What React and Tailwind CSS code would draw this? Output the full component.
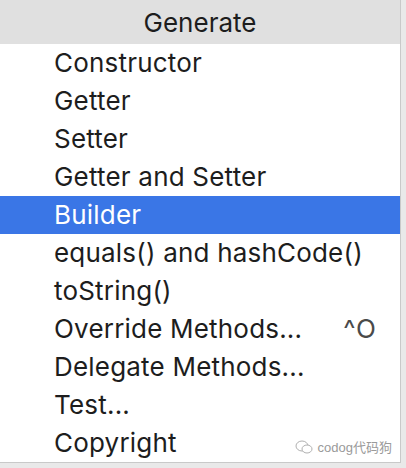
import React from "react";

const items = [
  { label: "Constructor" },
  { label: "Getter" },
  { label: "Setter" },
  { label: "Getter and Setter" },
  { label: "Builder", selected: true },
  { label: "equals() and hashCode()" },
  { label: "toString()" },
  { label: "Override Methods...", shortcut: "^O" },
  { label: "Delegate Methods..." },
  { label: "Test..." },
  { label: "Copyright" },
];

export default function App() {
  return (
    <div
      className="w-[406px] h-[468px] bg-[#e9e9e9] overflow-hidden"
      style={{ fontFamily: "Inter, 'Liberation Sans', sans-serif" }}
    >
      <div className="relative w-[401px] bg-white border-r border-b border-[#c9c9c9]">
        <div className="h-[44px] bg-[#e0e0e0] flex items-center justify-center text-[26px] text-[#1d1d1d] leading-none pt-[2px]">
          Generate
        </div>
        {items.map((it) => (
          <div
            key={it.label}
            className={
              it.selected
                ? "h-[38px] flex items-center pl-[54px] pr-[23px] bg-[#3a76e6] text-white text-[26px] leading-none tracking-[0.2px]"
                : "h-[38px] flex items-center pl-[54px] pr-[23px] text-[#1d1d1d] text-[26px] leading-none tracking-[0.2px]"
            }
          >
            <span>{it.label}</span>
            {it.shortcut && (
              <span className="ml-auto text-[#4a4a4a] tracking-[1px]">{it.shortcut}</span>
            )}
          </div>
        ))}
        <div
          className="absolute right-[8px] bottom-[5px] flex items-center gap-[5px] text-[13px] text-[#9a9a9a]"
          style={{ fontFamily: "'Liberation Sans', 'Noto Sans CJK SC', sans-serif" }}
        >
          <svg width="18" height="14" viewBox="0 0 18 14" fill="none" stroke="#b0b0b0" strokeWidth="1">
            <ellipse cx="7" cy="6" rx="6" ry="5" />
            <ellipse cx="12" cy="9" rx="5" ry="4" fill="white" />
          </svg>
          <span>codog代码狗</span>
        </div>
      </div>
    </div>
  );
}
